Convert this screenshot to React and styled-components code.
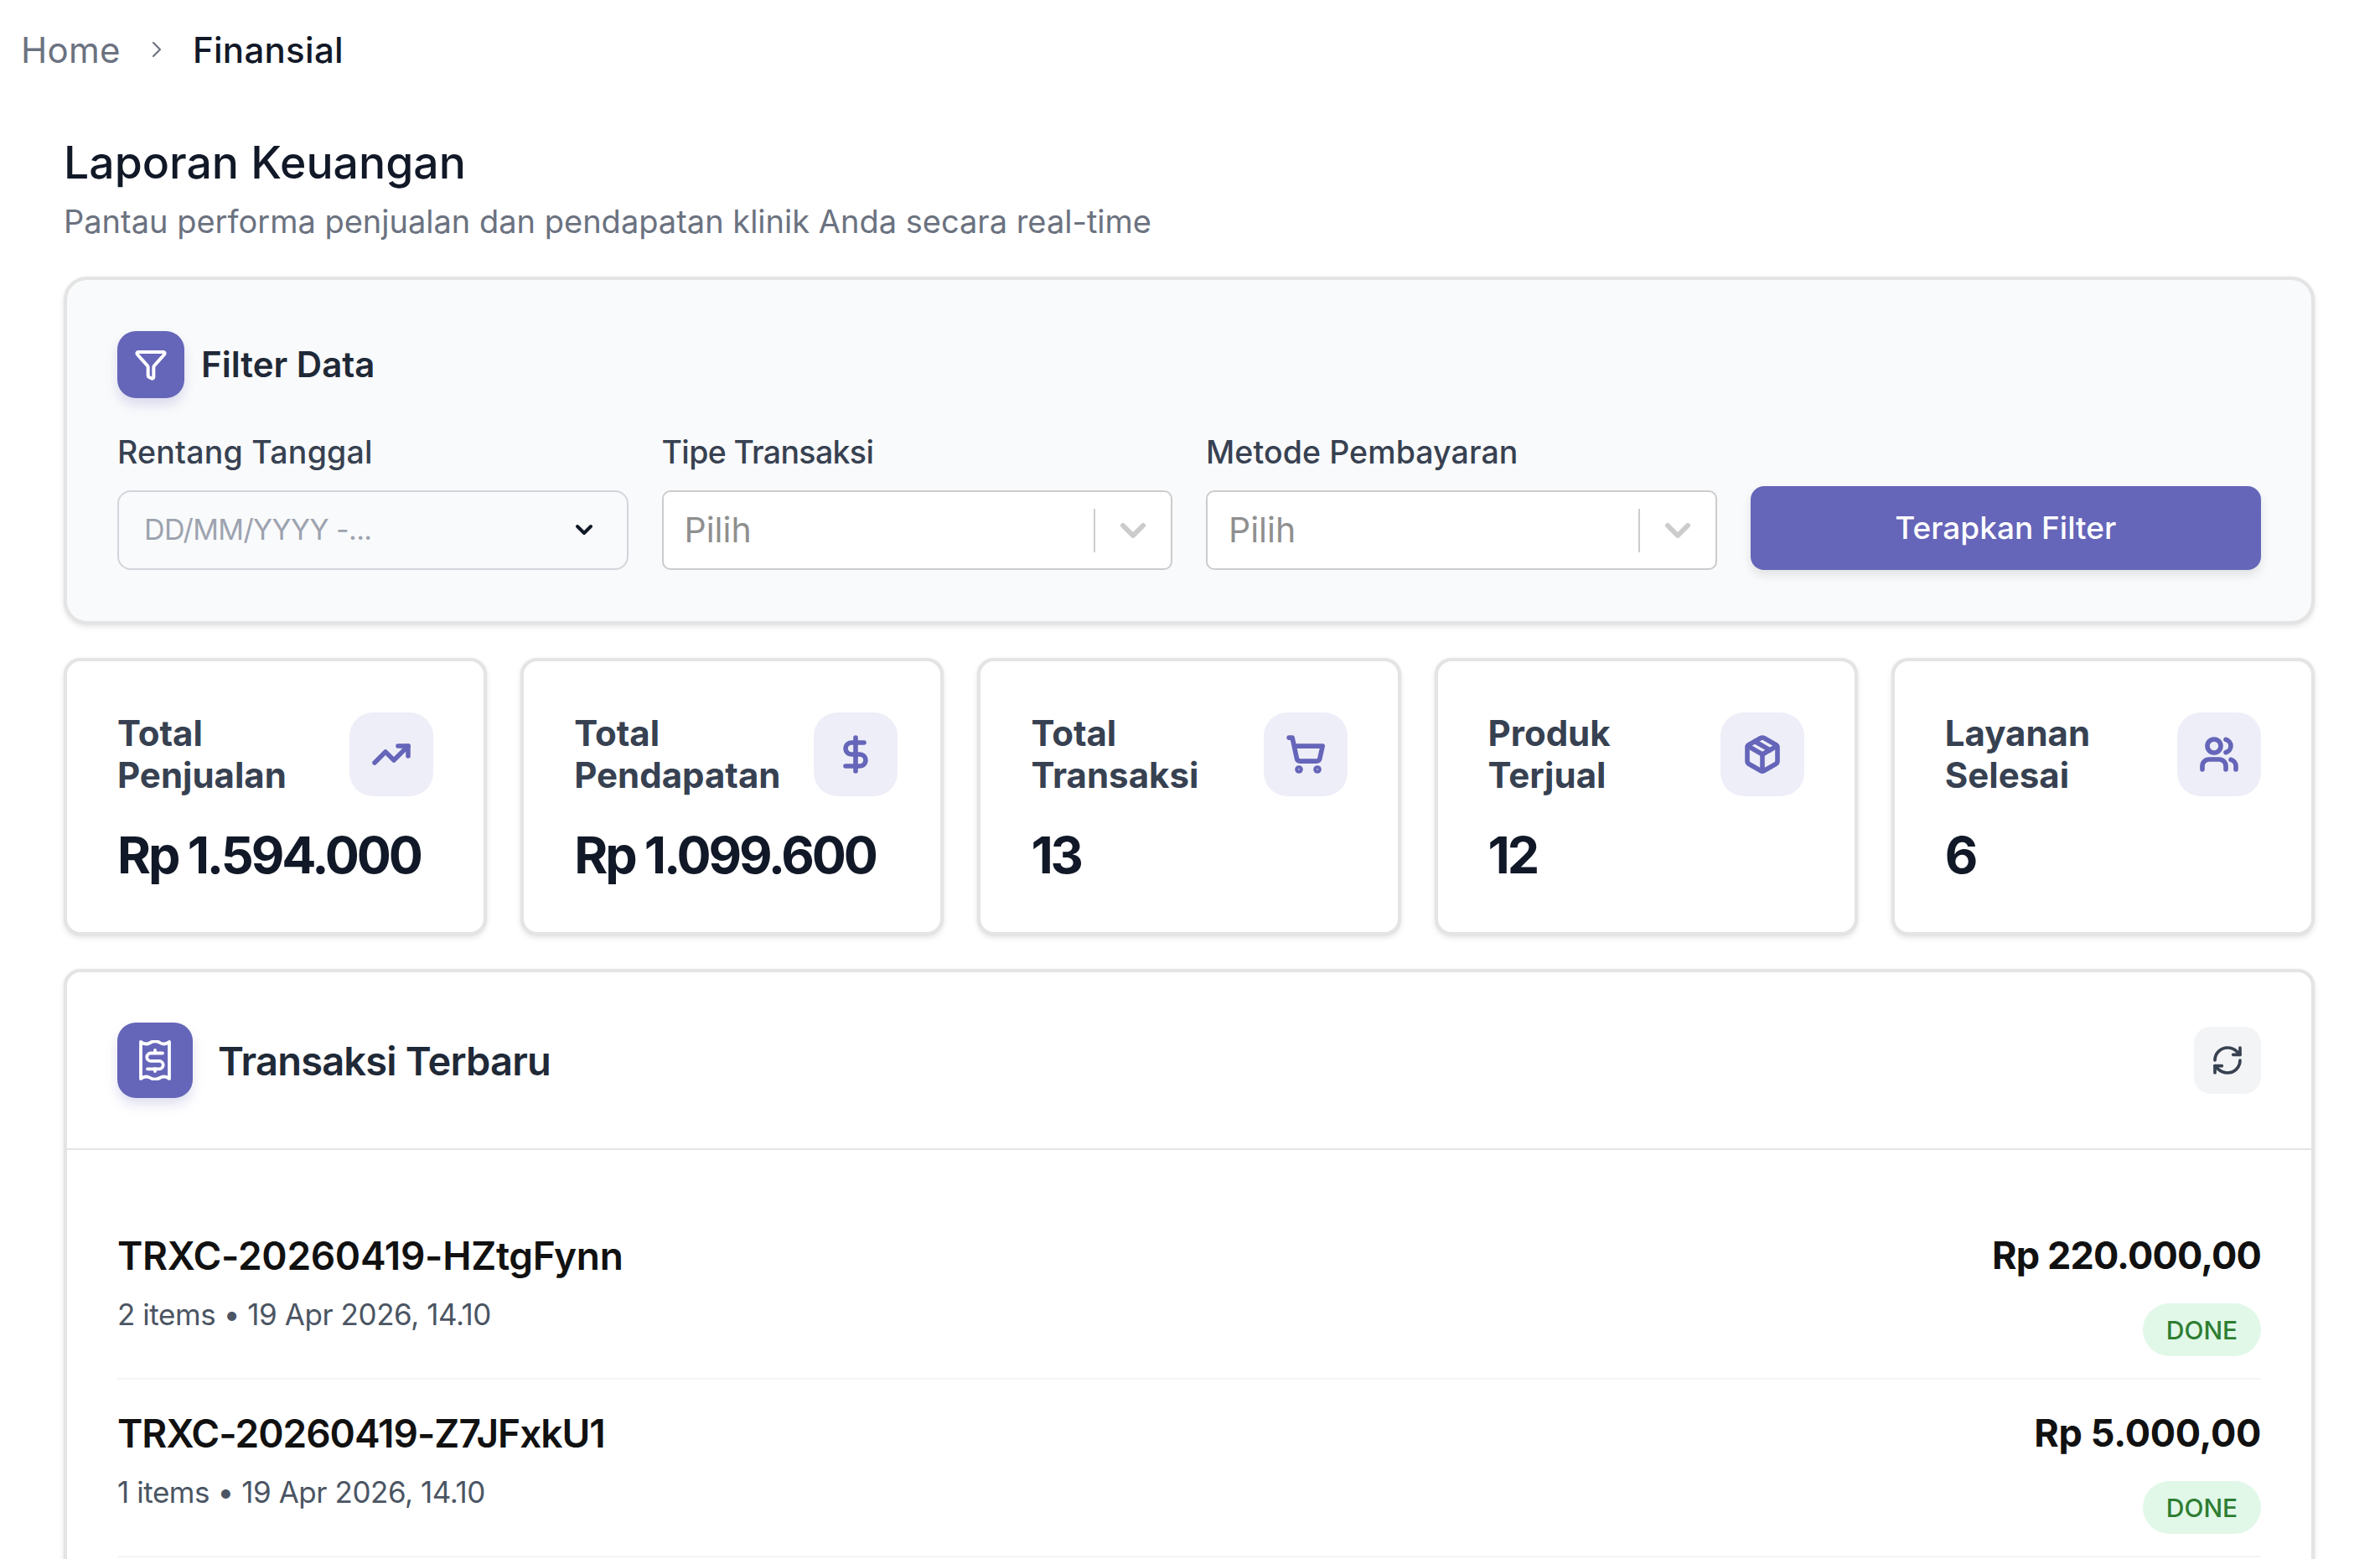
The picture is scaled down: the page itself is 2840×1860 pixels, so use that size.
import React from "react";
import styled, { createGlobalStyle } from "styled-components";
import { ChevronRight, ChevronDown, Filter, TrendingUp, DollarSign, ShoppingCart, Package, Users, RefreshCw } from "lucide-react";

const Global = createGlobalStyle`
  html, body { margin: 0; padding: 0; background: #fff; height: 1860px; overflow: hidden; }
  * { box-sizing: border-box; }
  body { font-family: Inter, "Noto Sans", "Liberation Sans", sans-serif; }
`;
const Page = styled.div`width: 2840px; height: 1860px; overflow: hidden;`;
const Breadcrumb = styled.nav`
  display: flex; align-items: center; height: 120px; padding: 0 0 2px 25px;
  font-size: 42px; color: #6b7280;
`;
const Crumb = styled.span`
  color: ${p => p.$current ? "#111827" : "#6b7280"}; font-weight: ${p => p.$current ? 500 : 400};
  letter-spacing: .3px;
`;
const Sep = styled.span`display: flex; width: 86px; justify-content: center; color: #6b7280;`;
const Main = styled.main`padding: 0 78px 0 76px; display: flex; flex-direction: column; gap: 40px;`;
const Header = styled.header`display: flex; flex-direction: column; padding-top: 40px; height: 170px;`;
const Title = styled.h1`margin: 0; font-size: 53.5px; line-height: 68px; font-weight: 500; color: #111827;`;
const Subtitle = styled.p`margin: 2px 0 0; font-size: 38px; line-height: 68px; font-weight: 400; color: #6b7280;`;
const Panel = styled.section`
  border: 4px solid #e4e4e4; border-radius: 28px; background: ${p => p.$muted ? "#f9fafb" : "#fff"};
  box-shadow: 0 3px 6px rgba(0,0,0,.1), 0 0 2px rgba(0,0,0,.06);
`;
const FilterPanel = styled(Panel)`padding: 61px 60px 0; height: 415px;`;
const FilterHead = styled.div`display: flex; align-items: center; gap: 20px;`;
const SolidIcon = styled.div`
  display: flex; align-items: center; justify-content: center; flex: none; color: #fff; background: #6565b9;
  width: ${p => p.$size}px; height: ${p => p.$size}px; border-radius: 22px;
  box-shadow: 0 8px 14px rgba(101,101,185,.2);
`;
const FilterTitle = styled.h2`margin: 0; font-size: 42px; line-height: 78px; font-weight: 600; color: #1f2937;`;
const FilterGrid = styled.div`display: grid; grid-template-columns: repeat(4, minmax(0, 1fr)); gap: 40px; align-items: end; margin-top: 45px;`;
const Field = styled.div`display: flex; flex-direction: column; gap: 25px;`;
const Label = styled.label`font-size: 37.5px; line-height: 40px; font-weight: 500; letter-spacing: ${p => p.$ls}px; color: #374151;`;
const DateInput = styled.div`
  display: flex; align-items: center; justify-content: space-between; height: 95px; padding: 0 35px 2px 30px;
  border: 2px solid #d1d5db; border-radius: 16px; color: #9ca3af; font-size: 34px; letter-spacing: -0.6px;
`;
const DateChevron = styled(ChevronDown)`color: #111827;`;
const Select = styled.div`
  display: flex; align-items: center; height: 95px; padding-left: 25px; background: #fff;
  border: 2px solid #ccc; border-radius: 10px; color: #8f8f8f; font-size: 41px;
`;
const SelectText = styled.span`flex: 1; padding-bottom: 2px;`;
const SelectDivider = styled.span`width: 2px; height: 52px; background: #ccc;`;
const SelectArrow = styled.span`display: flex; width: 90px; justify-content: center; color: #ccc;`;
const Apply = styled.button`
  height: 100px; border: 0; border-radius: 16px; padding: 0 0 2px; background: #6565b9; color: #fff; font: 500 37px Inter, sans-serif;
  box-shadow: 0 6px 12px rgba(0,0,0,.1);
`;
const Stats = styled.div`display: grid; grid-template-columns: repeat(5, minmax(0, 1fr)); gap: 40px;`;
const StatCard = styled(Panel)`height: 331px; padding: 61px 60px 0; border-radius: 20px;`;
const StatTop = styled.div`display: flex; gap: 40px; align-items: flex-start;`;
const StatLabel = styled.div`flex: none; font-size: 42px; line-height: 50px; font-weight: 700; color: #374151;`;
const StatTile = styled.div`
  display: flex; align-items: center; justify-content: center; width: 100px; height: 100px; flex: none; margin-left: auto;
  background: #eeeef8; border-radius: 28px; color: #6565b9;
`;
const StatValue = styled.div`
  margin-top: 30px; font-size: 61px; line-height: 80px; font-weight: 700; color: #111827; white-space: nowrap;
  letter-spacing: -3.1px;
`;
const ListCard = styled(Panel)`border-radius: 20px; min-height: 900px;`;
const ListHead = styled.div`display: flex; align-items: center; height: 212px; padding: 0 60px; border-bottom: 2px solid #e5e5e5;`;
const ListTitleWrap = styled.div`flex: 1; display: flex; align-items: center; gap: 30px;`;
const ListTitle = styled.h2`margin: 0; font-size: 47px; font-weight: 600; letter-spacing: -0.8px; color: #1f2937;`;
const IconButton = styled.button`
  display: flex; align-items: center; justify-content: center; width: 80px; height: 80px; padding: 0; border: 0;
  border-radius: 20px; background: #f3f4f6; color: #374151;
`;
const List = styled.div`padding: 62px 60px 0;`;
const Row = styled.div`
  display: flex; justify-content: space-between; height: 212px; padding-top: 30px;
  border-bottom: 2px solid #f3f4f6;
`;
const RowId = styled.div`font-size: 46px; line-height: 68px; font-weight: 600; letter-spacing: ${p => p.$ls}px; color: #111;`;
const RowMeta = styled.div`margin-top: 8px; font-size: 35px; line-height: 56px; letter-spacing: -0.44px; color: #4b5563;`;
const RowRight = styled.div`display: flex; flex-direction: column; align-items: flex-end; gap: 23px;`;
const Amount = styled.div`font-size: 45px; line-height: 68px; font-weight: 700; letter-spacing: ${p => p.$ls}px; color: #111;`;
const Badge = styled.span`
  display: flex; align-items: center; justify-content: center; width: 141px; height: 63px;
  border-radius: 32px; background: #e1f8e8; color: #2e7d32; font-size: 30px; font-weight: 500;
`;

const ReceiptIcon = () => (
  <svg width="38" height="48" viewBox="0 0 38 48" fill="none" stroke="currentColor" strokeWidth="3.8" strokeLinecap="round" strokeLinejoin="round">
    <path d="M2 2 Q7.5 6.5 13.3 3 T24.7 3 T36 2 V46 Q30.5 41.5 24.7 45 T13.3 45 T2 46 Z" />
    <path d="M28 15.5 H14 a4.7 4.7 0 0 0 0 9.4 h10 a4.7 4.7 0 0 1 0 9.4 H10" />
    <path d="M19 12 v3 M19 34 v3" />
  </svg>
);

const stats = [
  ["Total", "Penjualan", "Rp 1.594.000", TrendingUp],
  ["Total", "Pendapatan", "Rp 1.099.600", DollarSign],
  ["Total", "Transaksi", "13", ShoppingCart],
  ["Produk", "Terjual", "12", Package],
  ["Layanan", "Selesai", "6", Users],
];
const rows = [
  ["TRXC-20260419-HZtgFynn", "2 items • 19 Apr 2026, 14.10", "Rp 220.000,00", -0.3, -0.85],
  ["TRXC-20260419-Z7JFxkU1", "1 items • 19 Apr 2026, 14.10", "Rp 5.000,00", -1, -0.3],
];

const SelectField = ({ label, ls }) => (
  <Field>
    <Label $ls={ls}>{label}</Label>
    <Select>
      <SelectText>Pilih</SelectText>
      <SelectDivider />
      <SelectArrow><ChevronDown size={48} strokeWidth={3} /></SelectArrow>
    </Select>
  </Field>
);

export default function App() {
  return (
    <Page>
      <Global />
      <Breadcrumb>
        <Crumb>Home</Crumb>
        <Sep><ChevronRight size={32} strokeWidth={1.6} /></Sep>
        <Crumb $current>Finansial</Crumb>
      </Breadcrumb>
      <Main>
        <Header>
          <Title>Laporan Keuangan</Title>
          <Subtitle>Pantau performa penjualan dan pendapatan klinik Anda secara real-time</Subtitle>
        </Header>
        <FilterPanel $muted>
          <FilterHead>
            <SolidIcon $size={80}><Filter size={40} strokeWidth={2.4} /></SolidIcon>
            <FilterTitle>Filter Data</FilterTitle>
          </FilterHead>
          <FilterGrid>
            <Field>
              <Label $ls={0.24}>Rentang Tanggal</Label>
              <DateInput>DD/MM/YYYY -...<DateChevron size={32} strokeWidth={3} /></DateInput>
            </Field>
            <SelectField label="Tipe Transaksi" ls={-0.65} />
            <SelectField label="Metode Pembayaran" ls={0.1} />
            <Apply>Terapkan Filter</Apply>
          </FilterGrid>
        </FilterPanel>
        <Stats>
          {stats.map(([a, b, v, Icon]) => (
            <StatCard key={b}>
              <StatTop>
                <StatLabel>{a}<br />{b}</StatLabel>
                <StatTile><Icon size={48} strokeWidth={2.8} /></StatTile>
              </StatTop>
              <StatValue>{v}</StatValue>
            </StatCard>
          ))}
        </Stats>
        <ListCard>
          <ListHead>
            <ListTitleWrap>
              <SolidIcon $size={90}><ReceiptIcon /></SolidIcon>
              <ListTitle>Transaksi Terbaru</ListTitle>
            </ListTitleWrap>
            <IconButton><RefreshCw size={40} strokeWidth={2.2} /></IconButton>
          </ListHead>
          <List>
            {rows.map(([id, meta, amount, idLs, amountLs]) => (
              <Row key={id}>
                <div>
                  <RowId $ls={idLs}>{id}</RowId>
                  <RowMeta>{meta}</RowMeta>
                </div>
                <RowRight>
                  <Amount $ls={amountLs}>{amount}</Amount>
                  <Badge>DONE</Badge>
                </RowRight>
              </Row>
            ))}
          </List>
        </ListCard>
      </Main>
    </Page>
  );
}
